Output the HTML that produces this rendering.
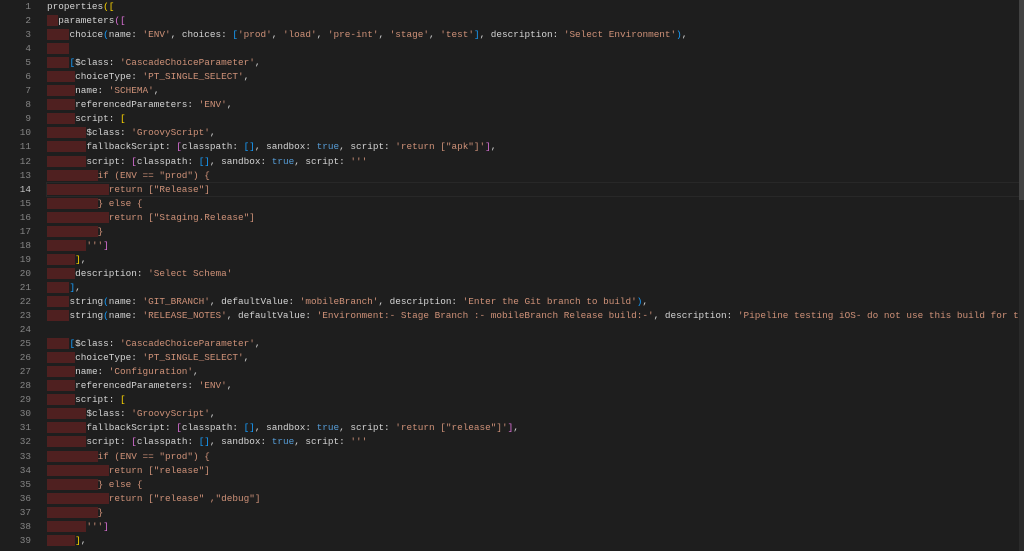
<!DOCTYPE html>
<html><head><meta charset="utf-8"><style>
html,body{margin:0;padding:0;background:#1e1e1e;width:1024px;height:551px;overflow:hidden}
.ed{position:absolute;left:0;top:0;width:1024px;height:551px;font-family:"Liberation Mono",monospace;font-size:9.37px;color:#d4d4d4}
.l{position:relative;height:14.05px;line-height:14.05px;white-space:pre}
.n{position:absolute;left:0;width:31px;text-align:right;color:#858585}
.c{position:absolute;left:47px}
.r{background:#4f2020}
.s{color:#ce9178}
.k{color:#569cd6}
.y{color:#ffd700}
.p{color:#da70d6}
.b{color:#179fff}
.cur .n{color:#c6c6c6}
.hl{position:absolute;left:46px;top:182px;width:972px;height:13px;border:1px solid #282828}
.sb{position:absolute;left:1019px;top:0;width:5px;height:551px;background:#2a2a2a}
.sb2{position:absolute;left:1019px;top:0;width:5px;height:200px;background:#424242}
</style></head><body><div class="ed">
<div class="hl"></div>
<div class="l"><span class="n">1</span><span class="c">properties<span class="y">([</span></span></div>
<div class="l"><span class="n">2</span><span class="c"><span class="r">  </span>parameters<span class="p">([</span></span></div>
<div class="l"><span class="n">3</span><span class="c"><span class="r">    </span>choice<span class="b">(</span>name: <span class="s">'ENV'</span>, choices: <span class="b">[</span><span class="s">'prod'</span>, <span class="s">'load'</span>, <span class="s">'pre-int'</span>, <span class="s">'stage'</span>, <span class="s">'test'</span><span class="b">]</span>, description: <span class="s">'Select Environment'</span><span class="b">)</span>,</span></div>
<div class="l"><span class="n">4</span><span class="c"><span class="r">    </span></span></div>
<div class="l"><span class="n">5</span><span class="c"><span class="r">    </span><span class="b">[</span>$class: <span class="s">'CascadeChoiceParameter'</span>,</span></div>
<div class="l"><span class="n">6</span><span class="c"><span class="r">     </span>choiceType: <span class="s">'PT_SINGLE_SELECT'</span>,</span></div>
<div class="l"><span class="n">7</span><span class="c"><span class="r">     </span>name: <span class="s">'SCHEMA'</span>,</span></div>
<div class="l"><span class="n">8</span><span class="c"><span class="r">     </span>referencedParameters: <span class="s">'ENV'</span>,</span></div>
<div class="l"><span class="n">9</span><span class="c"><span class="r">     </span>script: <span class="y">[</span></span></div>
<div class="l"><span class="n">10</span><span class="c"><span class="r">       </span>$class: <span class="s">'GroovyScript'</span>,</span></div>
<div class="l"><span class="n">11</span><span class="c"><span class="r">       </span>fallbackScript: <span class="p">[</span>classpath: <span class="b">[]</span>, sandbox: <span class="k">true</span>, script: <span class="s">'return ["apk"]'</span><span class="p">]</span>,</span></div>
<div class="l"><span class="n">12</span><span class="c"><span class="r">       </span>script: <span class="p">[</span>classpath: <span class="b">[]</span>, sandbox: <span class="k">true</span>, script: <span class="s">'''</span></span></div>
<div class="l"><span class="n">13</span><span class="c s"><span class="r">         </span>if (ENV == "prod") {</span></div>
<div class="l cur"><span class="n">14</span><span class="c s"><span class="r">           </span>return ["Release"]</span></div>
<div class="l"><span class="n">15</span><span class="c s"><span class="r">         </span>} else {</span></div>
<div class="l"><span class="n">16</span><span class="c s"><span class="r">           </span>return ["Staging.Release"]</span></div>
<div class="l"><span class="n">17</span><span class="c s"><span class="r">         </span>}</span></div>
<div class="l"><span class="n">18</span><span class="c"><span class="r">       </span><span class="s">'''</span><span class="p">]</span></span></div>
<div class="l"><span class="n">19</span><span class="c"><span class="r">     </span><span class="y">]</span>,</span></div>
<div class="l"><span class="n">20</span><span class="c"><span class="r">     </span>description: <span class="s">'Select Schema'</span></span></div>
<div class="l"><span class="n">21</span><span class="c"><span class="r">    </span><span class="b">]</span>,</span></div>
<div class="l"><span class="n">22</span><span class="c"><span class="r">    </span>string<span class="b">(</span>name: <span class="s">'GIT_BRANCH'</span>, defaultValue: <span class="s">'mobileBranch'</span>, description: <span class="s">'Enter the Git branch to build'</span><span class="b">)</span>,</span></div>
<div class="l"><span class="n">23</span><span class="c"><span class="r">    </span>string<span class="b">(</span>name: <span class="s">'RELEASE_NOTES'</span>, defaultValue: <span class="s">'Environment:- Stage Branch :- mobileBranch Release build:-'</span>, description: <span class="s">'Pipeline testing iOS- do not use this build for test</span></span></div>
<div class="l"><span class="n">24</span><span class="c"></span></div>
<div class="l"><span class="n">25</span><span class="c"><span class="r">    </span><span class="b">[</span>$class: <span class="s">'CascadeChoiceParameter'</span>,</span></div>
<div class="l"><span class="n">26</span><span class="c"><span class="r">     </span>choiceType: <span class="s">'PT_SINGLE_SELECT'</span>,</span></div>
<div class="l"><span class="n">27</span><span class="c"><span class="r">     </span>name: <span class="s">'Configuration'</span>,</span></div>
<div class="l"><span class="n">28</span><span class="c"><span class="r">     </span>referencedParameters: <span class="s">'ENV'</span>,</span></div>
<div class="l"><span class="n">29</span><span class="c"><span class="r">     </span>script: <span class="y">[</span></span></div>
<div class="l"><span class="n">30</span><span class="c"><span class="r">       </span>$class: <span class="s">'GroovyScript'</span>,</span></div>
<div class="l"><span class="n">31</span><span class="c"><span class="r">       </span>fallbackScript: <span class="p">[</span>classpath: <span class="b">[]</span>, sandbox: <span class="k">true</span>, script: <span class="s">'return ["release"]'</span><span class="p">]</span>,</span></div>
<div class="l"><span class="n">32</span><span class="c"><span class="r">       </span>script: <span class="p">[</span>classpath: <span class="b">[]</span>, sandbox: <span class="k">true</span>, script: <span class="s">'''</span></span></div>
<div class="l"><span class="n">33</span><span class="c s"><span class="r">         </span>if (ENV == "prod") {</span></div>
<div class="l"><span class="n">34</span><span class="c s"><span class="r">           </span>return ["release"]</span></div>
<div class="l"><span class="n">35</span><span class="c s"><span class="r">         </span>} else {</span></div>
<div class="l"><span class="n">36</span><span class="c s"><span class="r">           </span>return ["release" ,"debug"]</span></div>
<div class="l"><span class="n">37</span><span class="c s"><span class="r">         </span>}</span></div>
<div class="l"><span class="n">38</span><span class="c"><span class="r">       </span><span class="s">'''</span><span class="p">]</span></span></div>
<div class="l"><span class="n">39</span><span class="c"><span class="r">     </span><span class="y">]</span>,</span></div>
<div class="sb"></div><div class="sb2"></div>
</div></body></html>
